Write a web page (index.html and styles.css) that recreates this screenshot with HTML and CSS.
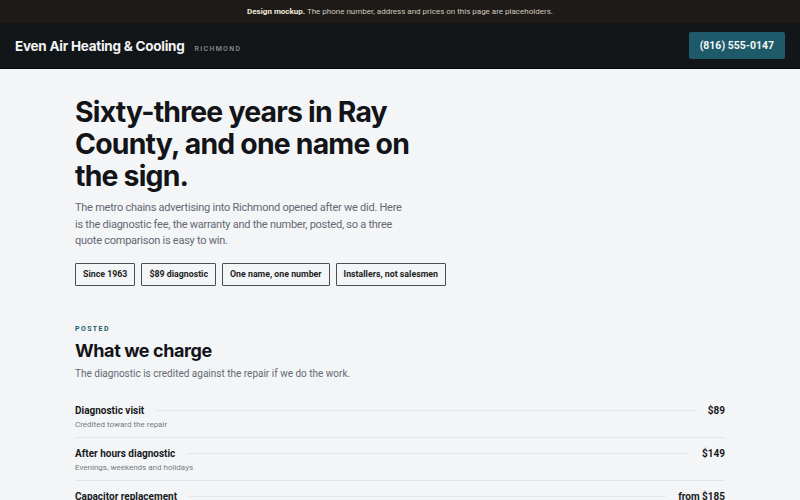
FILE: index.html
```html
<!DOCTYPE html>
<html lang="en">
<head>
<meta charset="utf-8">
<title>Even Air Heating &amp; Cooling — Richmond</title>
<link rel="stylesheet" href="styles.css">
</head>
<body>
  <div class="notice"><strong>Design mockup.</strong> The phone number, address and prices on this page are placeholders.</div>
  <header class="topbar">
    <div class="brand">
      <span class="brand-name">Even Air Heating &amp; Cooling</span>
      <span class="brand-town">Richmond</span>
    </div>
    <a class="call" href="tel:8165550147">(816) 555-0147</a>
  </header>

  <main class="page">
    <section class="hero">
      <h1>Sixty-three years in Ray County, and one name on the sign.</h1>
      <p class="lede">The metro chains advertising into Richmond opened after we did. Here is the diagnostic fee, the warranty and the number, posted, so a three quote comparison is easy to win.</p>
      <ul class="facts">
        <li>Since 1963</li>
        <li>$89 diagnostic</li>
        <li>One name, one number</li>
        <li>Installers, not salesmen</li>
      </ul>
    </section>

    <section class="prices">
      <div class="eyebrow">Posted</div>
      <h2>What we charge</h2>
      <p class="sub">The diagnostic is credited against the repair if we do the work.</p>
      <ul class="rate-list">
        <li class="rate">
          <div class="rate-line"><span class="rate-name">Diagnostic visit</span><span class="leader"></span><span class="rate-price">$89</span></div>
          <div class="rate-note">Credited toward the repair</div>
        </li>
        <li class="rate">
          <div class="rate-line"><span class="rate-name">After hours diagnostic</span><span class="leader"></span><span class="rate-price">$149</span></div>
          <div class="rate-note">Evenings, weekends and holidays</div>
        </li>
        <li class="rate">
          <div class="rate-line"><span class="rate-name">Capacitor replacement</span><span class="leader"></span><span class="rate-price">from $185</span></div>
          <div class="rate-note">Parts and labor</div>
        </li>
      </ul>
    </section>
  </main>
</body>
</html>
```

FILE: styles.css
```css
* { box-sizing: border-box; }

html, body {
  margin: 0;
  padding: 0;
}

body {
  background: #f4f5f7;
  color: #16191d;
  font-family: Roboto, "Liberation Sans", sans-serif;
}

/* placeholder notice strip */
.notice {
  background: #1d1a17;
  color: #cfc8be;
  font-size: 8px;
  height: 23px;
  line-height: 23px;
  text-align: center;
}
.notice strong {
  color: #f3ead8;
  font-weight: 700;
}

/* site header */
.topbar {
  background: #131619;
  border-bottom: 1px solid #050607;
  height: 46px;
  display: flex;
  align-items: center;
  justify-content: space-between;
  padding: 0 15px;
}
.brand {
  display: flex;
  align-items: baseline;
  gap: 10px;
}
.brand-name {
  color: #f2f3f4;
  font-family: Inter, "Liberation Sans", sans-serif;
  font-weight: 700;
  font-size: 13.5px;
  letter-spacing: -0.25px;
}
.brand-town {
  color: #8b9096;
  font-size: 7px;
  font-weight: 500;
  letter-spacing: 1.3px;
  text-transform: uppercase;
}
.call {
  background: #1e5a6a;
  color: #f4f6f7;
  font-size: 10.5px;
  font-weight: 700;
  text-decoration: none;
  height: 27px;
  line-height: 27px;
  padding: 0 11px;
  border-radius: 2px;
}

/* main column */
.page {
  width: 650px;
  margin: 0 auto;
  padding-top: 27px;
}

.hero h1 {
  margin: 0;
  max-width: 340px;
  font-family: Inter, "Liberation Sans", sans-serif;
  font-weight: 700;
  font-size: 28.4px;
  line-height: 32px;
  letter-spacing: -0.8px;
  color: #121417;
}
.lede {
  margin: 8px 0 0;
  max-width: 335px;
  font-size: 11px;
  line-height: 16.5px;
  letter-spacing: -0.25px;
  color: #626973;
}
.facts {
  list-style: none;
  margin: 13px 0 0;
  padding: 0;
  display: flex;
  gap: 6px;
}
.facts li {
  border: 1px solid #4a4d52;
  border-radius: 1px;
  height: 23px;
  line-height: 21px;
  padding: 0 7px;
  font-size: 8.8px;
  font-weight: 700;
  color: #1b1e22;
}

/* price list */
.prices {
  margin-top: 38px;
}
.eyebrow {
  color: #1e5a6a;
  font-size: 7px;
  line-height: 10px;
  font-weight: 700;
  letter-spacing: 1.4px;
  text-transform: uppercase;
}
.prices h2 {
  margin: 5px 0 0;
  font-family: Inter, "Liberation Sans", sans-serif;
  font-weight: 700;
  font-size: 18px;
  line-height: 24px;
  letter-spacing: -0.4px;
  color: #121417;
}
.sub {
  margin: 4px 0 0;
  font-size: 10px;
  line-height: 14px;
  color: #626973;
}
.rate-list {
  list-style: none;
  margin: 14px 0 0;
  padding: 0;
}
.rate {
  padding: 9px 0 7px;
  border-bottom: 1px solid #e3e5e8;
}
.rate-line {
  display: flex;
  align-items: center;
  gap: 12px;
  height: 13px;
}
.rate-name {
  font-size: 10px;
  font-weight: 700;
  color: #16191d;
}
.leader {
  flex: 1;
  border-top: 1px solid #e4e6e9;
}
.rate-price {
  font-size: 10px;
  font-weight: 700;
  color: #16191d;
}
.rate-note {
  margin-top: 2px;
  font-size: 8px;
  line-height: 11px;
  color: #747b84;
}
```
